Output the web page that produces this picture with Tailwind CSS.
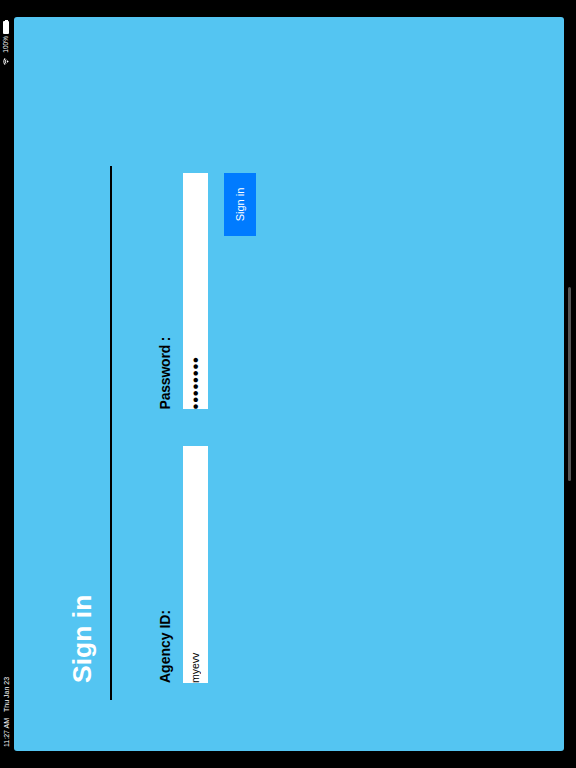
<!DOCTYPE html>
<html lang="en">
<head>
  <meta charset="UTF-8">
  <meta name="viewport" content="width=device-width, initial-scale=1.0">
  <title>Sign in</title>
  <script src="https://cdn.jsdelivr.net/npm/@tailwindcss/browser@4"></script>
</head>
<body class="bg-black font-['Liberation_Sans',Arial,sans-serif]">
  <div class="w-[576px] h-[768px] overflow-hidden">
    <!-- the whole device screen is turned on its side -->
    <div class="w-[768px] h-[576px] origin-top-left translate-y-[768px] -rotate-90 flex flex-col">
      <div class="h-[12px] flex items-center justify-between text-white text-[7px] leading-none pl-[21px] pr-[20px]">
        <div class="flex gap-[6px]">
          <span>11:27 AM</span>
          <span>Thu Jan 23</span>
        </div>
        <div class="flex items-center">
          <svg class="w-[7px] h-[6px] mr-[5px]" viewBox="0 0 16 12" fill="white"><path d="M8 12 5.400 9a3.600 3.600 0 0 1 5.200 0Z"/><path d="M3.900 7.400 2.600 5.900a7.600 7.600 0 0 1 10.800 0l-1.300 1.500a5.600 5.600 0 0 0-8.200 0Z"/><path d="M1.600 4.800 0 3.200a11.400 11.400 0 0 1 16 0l-1.600 1.600a9.200 9.200 0 0 0-12.800 0Z"/></svg>
          <span class="text-[6.500px] mr-[2px]">100%</span>
          <div class="w-[13px] h-[6px] bg-white rounded-[1px]"></div>
          <div class="w-px h-[3px] bg-white"></div>
        </div>
      </div>

      <main class="mt-[2px] mx-[17px] h-[550px] bg-[#54c5f2] rounded-[3px]">
        <div class="ml-[51px] w-[534px] pt-[52px]">
          <header class="h-[46px] border-b-2 border-black pl-[17px] pt-px">
            <h1 class="text-white font-bold text-[26.500px] leading-[30px]">Sign in</h1>
          </header>
          <form class="pl-[17px] pr-[7px] pt-[45px]">
            <div class="grid grid-cols-2 gap-x-[37px]">
              <div>
                <label class="block text-black font-bold text-[14px] leading-[16px] mb-[10px]">Agency ID:</label>
                <input type="text" value="myevv" class="block w-full h-[25px] pb-[2px] bg-white text-black text-[10.500px] outline-none">
              </div>
              <div>
                <label class="block text-black font-bold text-[14px] leading-[16px] mb-[10px] tracking-[-0.2px]">Password :</label>
                <input type="password" value="myevv123" class="block w-full h-[25px] bg-white text-black text-[17px] tracking-[0.7px] outline-none">
              </div>
            </div>
            <div class="flex justify-end mt-[16px]">
              <button type="button" class="w-[63px] h-[32px] bg-[#007bff] text-white text-[11px]">Sign in</button>
            </div>
          </form>
        </div>
      </main>

      <div class="flex-1 flex justify-center pt-[4px]">
        <div class="w-[194px] h-[3px] bg-[#555555] rounded-full"></div>
      </div>
    </div>
  </div>
</body>
</html>
